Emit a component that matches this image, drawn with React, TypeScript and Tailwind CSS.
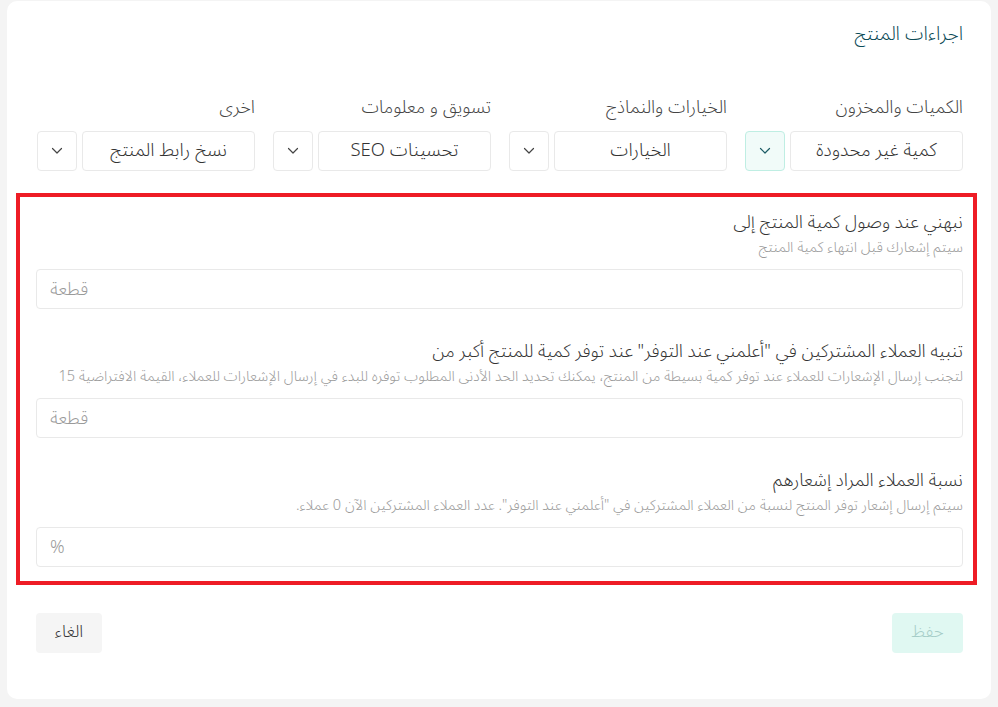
import React from "react";

function Chevron({ className = "" }: { className?: string }) {
  return (
    <svg width="12" height="8" viewBox="0 0 12 8" fill="none" className={className}>
      <path d="M1.5 1.5L6 6L10.5 1.5" stroke="currentColor" strokeWidth="1.2" strokeLinecap="round" strokeLinejoin="round" />
    </svg>
  );
}

function Group({ label, value, active = false }: { label: string; value: string; active?: boolean }) {
  return (
    <div className="flex w-[218px] flex-col">
      <div className="h-[22px] whitespace-nowrap text-[18px] leading-[22px] text-[#444]">{label}</div>
      <div className="mt-[13px] flex h-[40px] gap-[5px]">
        <div className="flex w-[173px] items-center justify-center whitespace-nowrap rounded-[4px] border border-[#e9e9e9] bg-white text-[18.5px] text-[#333]">
          {value}
        </div>
        <div
          className={
            active
              ? "flex w-[40px] items-center justify-center rounded-[4px] border border-[#bfeee3] bg-[#f1fbf9] text-[#1d5c66]"
              : "flex w-[40px] items-center justify-center rounded-[4px] border border-[#e9e9e9] bg-white text-[#444]"
          }
        >
          <Chevron />
        </div>
      </div>
    </div>
  );
}

function Field({ label, desc, unit, first = false }: { label: string; desc: string; unit: string; first?: boolean }) {
  return (
    <div className={first ? "flex flex-col" : "mt-[30px] flex flex-col"}>
      <div className="h-[24px] whitespace-nowrap text-[18px] leading-[24px] text-[#333]">{label}</div>
      <div className="mt-[5px] h-[18px] whitespace-nowrap text-[14.5px] leading-[18px] text-[#9a9a9a]">{desc}</div>
      <div className="mt-[12px] flex h-[40px] items-center justify-end rounded-[4px] border border-[#e9e9e9] bg-white pl-[13px]">
        <span className="text-[18px] text-[#9a9a9a]">{unit}</span>
      </div>
    </div>
  );
}

export default function App() {
  return (
    <div
      dir="rtl"
      className="min-h-[707px] bg-[#f4f4f4] px-[7px] pt-[1px] font-light"
      style={{ fontFamily: '"Noto Sans Arabic", "Noto Kufi Arabic", "IBM Plex Sans Arabic", "Tajawal", "Cairo", "Noto Naskh Arabic", "FreeSans", "DejaVu Sans", sans-serif' }}
    >
      <div className="h-[698px] rounded-[10px] bg-white pl-[29px] pr-[28px] pt-[20px]">
        <div className="h-[26px] whitespace-nowrap text-[19px] leading-[26px] text-[#0b4a56]">اجراءات المنتج</div>
        <div className="mt-[49px] flex gap-[18px]">
          <Group label="الكميات والمخزون" value="كمية غير محدودة" active />
          <Group label="الخيارات والنماذج" value="الخيارات" />
          <Group label="تسويق و معلومات" value="تحسينات SEO" />
          <Group label="اخرى" value="نسخ رابط المنتج" />
        </div>
        <div className="-ml-[20px] -mr-[14px] mt-[22px] border-4 border-[#ee1c25] pb-[14px] pl-[16px] pr-[10px] pt-[13px]">
          <Field
            first
            label="نبهني عند وصول كمية المنتج إلى"
            desc="سيتم إشعارك قبل انتهاء كمية المنتج"
            unit="قطعة"
          />
          <Field
            label='تنبيه العملاء المشتركين في "أعلمني عند التوفر" عند توفر كمية للمنتج أكبر من'
            desc="لتجنب إرسال الإشعارات للعملاء عند توفر كمية بسيطة من المنتج، يمكنك تحديد الحد الأدنى المطلوب توفره للبدء في إرسال الإشعارات للعملاء، القيمة الافتراضية 15"
            unit="قطعة"
          />
          <Field
            label="نسبة العملاء المراد إشعارهم"
            desc='سيتم إرسال إشعار توفر المنتج لنسبة من العملاء المشتركين في "أعلمني عند التوفر". عدد العملاء المشتركين الآن 0 عملاء.'
            unit="%"
          />
        </div>
        <div className="mt-[28px] flex justify-between">
          <button className="flex h-[40px] w-[71px] items-center justify-center rounded-[4px] bg-[#e0f8f2] text-[17px] text-[#a6cdc8]">
            حفظ
          </button>
          <button className="flex h-[40px] w-[66px] items-center justify-center rounded-[4px] bg-[#f5f5f5] text-[17px] text-[#333]">
            الغاء
          </button>
        </div>
      </div>
    </div>
  );
}
